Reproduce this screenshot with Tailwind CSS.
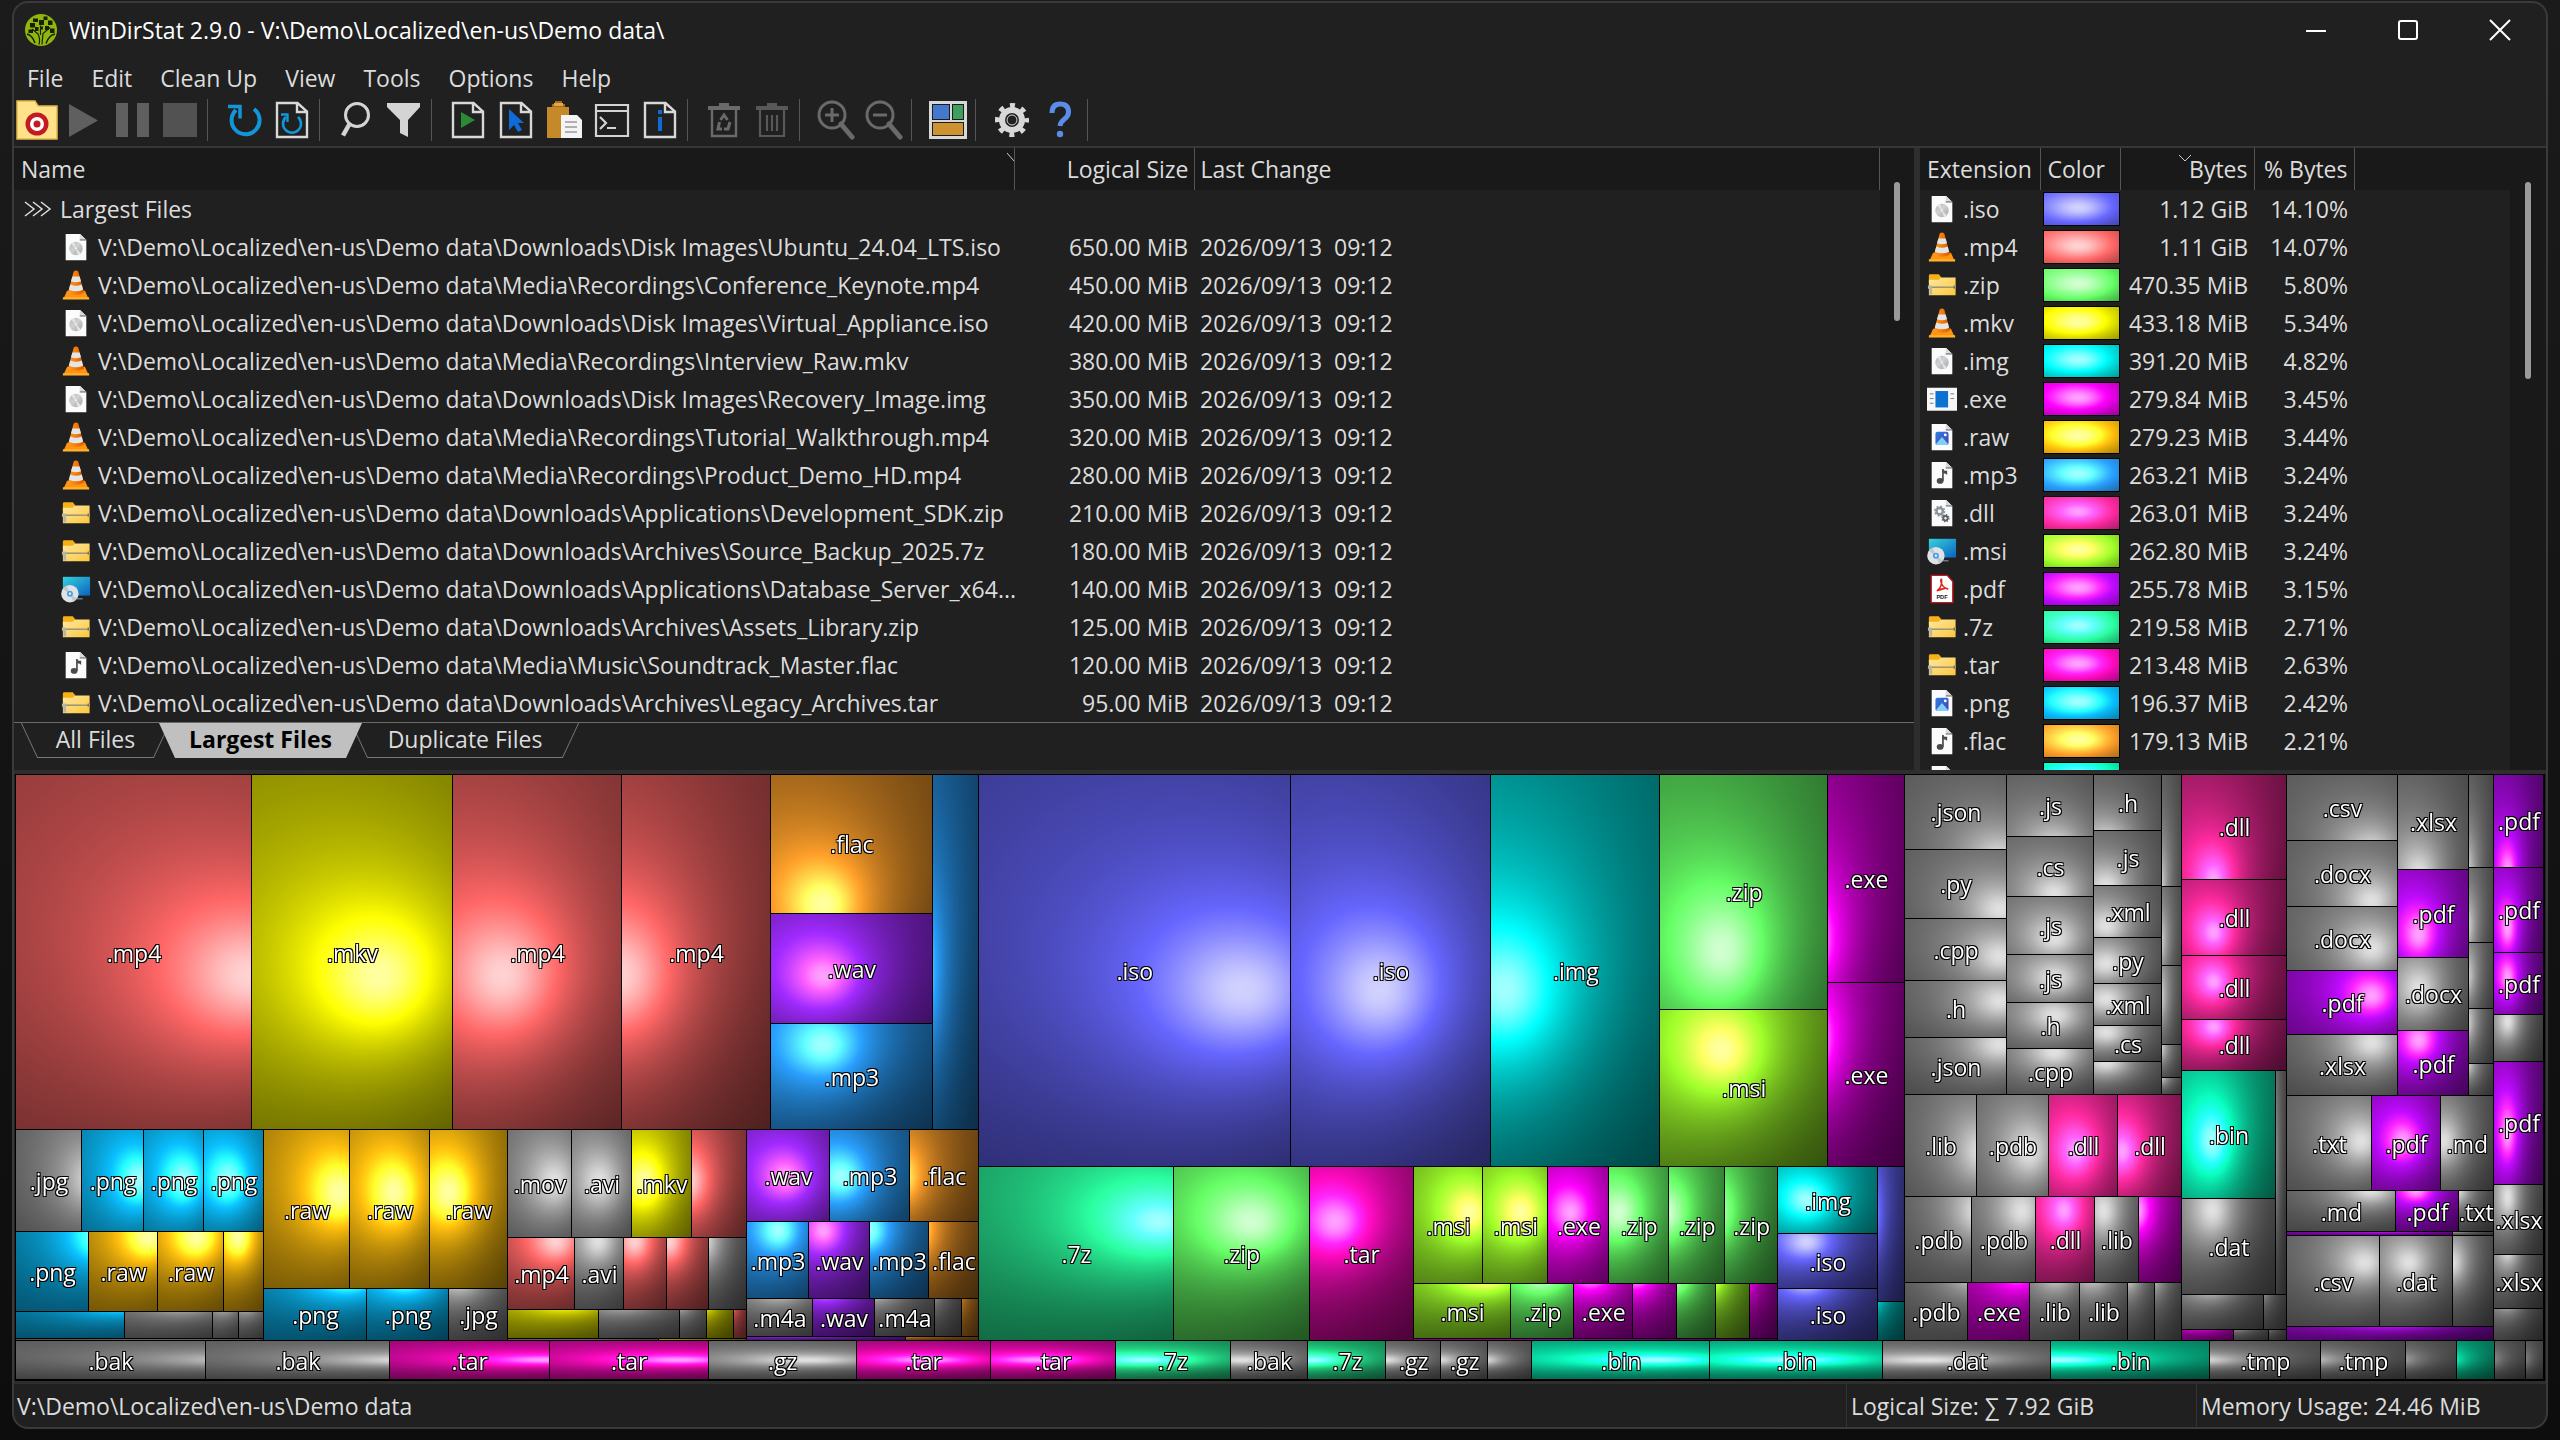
<!DOCTYPE html>
<html lang="en">
  <head>
    <meta charset="UTF-8" />
    <meta name="viewport" content="width=device-width, initial-scale=1.0" />
    <title>WinDirStat 2.9.0 - V:\Demo\Localized\en-us\Demo data\</title>
    <script src="https://cdn.jsdelivr.net/npm/@tailwindcss/browser@4"></script>
  </head>
  <body
    class="h-screen overflow-hidden bg-linear-to-b from-[#1b1b1b] to-[#0d0d0d] pt-px pr-3 pb-[11px] pl-3 font-['Open_Sans',sans-serif] text-[23px] leading-8 text-[#dcdcdc]"
  >
    <!-- Icon sprite -->
    <svg class="absolute size-0" aria-hidden="true">
      <defs>
        <linearGradient id="g-folder" x1="0" y1="0" x2="1" y2="1">
          <stop offset="0" stop-color="#ffe9a2" />
          <stop offset="1" stop-color="#fcc63b" />
        </linearGradient>
        <linearGradient id="g-screen" x1="0" y1="0" x2="1" y2="1">
          <stop offset="0" stop-color="#35d3dc" />
          <stop offset="1" stop-color="#0b62c0" />
        </linearGradient>
        <linearGradient id="g-cone" x1="0" y1="0" x2="1" y2="0">
          <stop offset="0" stop-color="#ff9a2e" />
          <stop offset="0.5" stop-color="#f57a08" />
          <stop offset="1" stop-color="#d95a00" />
        </linearGradient>
        <linearGradient id="g-disc" x1="0" y1="0" x2="1" y2="1">
          <stop offset="0" stop-color="#b4b6b8" />
          <stop offset="0.45" stop-color="#cfd1d2" />
          <stop offset="0.55" stop-color="#c4c6c8" />
          <stop offset="1" stop-color="#a9acae" />
        </linearGradient>
        <linearGradient id="g-image" x1="0" y1="0" x2="1" y2="1">
          <stop offset="0" stop-color="#2b7fe0" />
          <stop offset="1" stop-color="#4a3fb4" />
        </linearGradient>
      </defs>
      <symbol id="i-page" viewBox="0 0 32 32">
        <path d="M5 2h15.500l6.500 6.500V30H5z" fill="#fbfbfb" />
        <path d="M20 2.500v6h7z" fill="#dadada" />
        <path d="M20 8.500h7" stroke="#555" stroke-width="1" />
      </symbol>
      <symbol id="i-disc" viewBox="0 0 32 32">
        <use href="#i-page" />
        <circle cx="16" cy="17.500" r="7.200" fill="url(#g-disc)" />
        <path d="M16 17.500L11 12.300a7.200 7.200 0 0 1 3-1.700zM16 17.500l5 5.200a7.200 7.200 0 0 1-3 1.700z" fill="#e6e7e8" />
        <circle cx="16" cy="17.500" r="1.200" fill="#eee" />
      </symbol>
      <symbol id="i-cone" viewBox="0 0 32 32">
        <path d="M6.500 22h19l4 9h-27z" fill="#ff9410" />
        <path d="M2 29h28v2.500H2z" fill="#ffb02e" />
        <path d="M13.600 1.500Q16 -.5 18.400 1.500L24.500 24q-8.500 5-17 0z" fill="url(#g-cone)" />
        <path d="M12.200 7h7.600l1.600 5q-5.400 2-10.800 0zM9.900 15.500q6.100 2.500 12.200 0l1.500 5.500q-7.600 3.500-15.200 0z" fill="#e3e6e8" />
      </symbol>
      <symbol id="i-zip" viewBox="0 0 32 32">
        <path d="M2 6q0-1.500 1.500-1.500h9L15 7.500V14H2z" fill="#f7b016" />
        <path d="M2 10.500h10.500L15 8h15.500v19H2z" fill="url(#g-folder)" />
        <path d="M2 17h28.500v2.500H2z" fill="#e6d7a2" />
        <path d="M2 18.300h28.500" stroke="#7d6b3a" />
        <path d="M1 16.500h4v3.500H1zM2.500 20h3v6h-3z" fill="#b9b5a6" />
        <path d="M29 16.500v3.500" stroke="#555" />
      </symbol>
      <symbol id="i-msi" viewBox="0 0 32 32">
        <path d="M2 3h29v20H2z" fill="url(#g-screen)" />
        <path d="M17 26h6v1h-6z" fill="#9ab" />
        <circle cx="9.500" cy="21" r="9.300" fill="#dfe3e6" />
        <path d="M9.500 21L2 16a9 9 0 0 1 4-3.500zM9.500 21l7.500 5a9 9 0 0 1-4 3.500z" fill="#c3c8cc" />
        <circle cx="9.500" cy="21" r="3.200" fill="#4ba0e4" />
        <circle cx="9.500" cy="21" r="1.200" fill="#fff" />
      </symbol>
      <symbol id="i-note" viewBox="0 0 32 32">
        <use href="#i-page" />
        <path d="M17 9.500v12.500" stroke="#4a4a4a" stroke-width="1.800" />
        <path d="M16.300 9.500q1 2 5.200 2v4.500q-1-2-4.500-1.800z" fill="#4a4a4a" />
        <ellipse cx="14" cy="22.300" rx="3.600" ry="3" fill="#4a4a4a" />
      </symbol>
      <symbol id="i-exe" viewBox="0 0 32 32">
        <path d="M0 4h32v24.500H0z" fill="#f7f7f7" />
        <path d="M9 7.500h13.500v17.500H9z" fill="#0b72d2" />
        <path d="M3 10.500h4M3 15.500h4M3 20.500h4M25 10.500h4M25 15.500h4" stroke="#777" />
      </symbol>
      <symbol id="i-image" viewBox="0 0 32 32">
        <use href="#i-page" />
        <rect x="9" y="10.500" width="14" height="14" rx="2" fill="url(#g-image)" />
        <path d="M9.500 23.500l6.500-7.500 6.500 7.500q-.5 1-1.500 1h-10q-1 0-1.500-1z" fill="#7fd0f7" />
        <circle cx="19.500" cy="13.800" r="1.500" fill="#fff" />
      </symbol>
      <symbol id="i-gears" viewBox="0 0 32 32">
        <use href="#i-page" />
        <circle cx="13.500" cy="14" r="3.400" fill="none" stroke="#8b9298" stroke-width="2.600" />
        <circle cx="13.500" cy="14" r="5.100" fill="none" stroke="#8b9298" stroke-width="1.800" stroke-dasharray="2 2" />
        <circle cx="19.700" cy="21.500" r="2.300" fill="none" stroke="#5a6167" stroke-width="2" />
        <circle cx="19.700" cy="21.500" r="3.700" fill="none" stroke="#5a6167" stroke-width="1.400" stroke-dasharray="1.450 1.450" />
      </symbol>
      <symbol id="i-pdf" viewBox="0 0 32 32">
        <path d="M4.500 1.500h17l6 6.500v22.500h-23z" fill="#fff" stroke="#c4161c" stroke-width="1.400" />
        <path d="M10.500 18c4-2.500 6-8 5-12.500-2-.5-.5 8.500 6.500 10.500 1.500-1-7-1-11.500 2z" fill="none" stroke="#e2231a" stroke-width="1.600" />
        <text x="16" y="27" text-anchor="middle" font-family="Liberation Sans" font-weight="700" font-size="6" fill="#222">PDF</text>
      </symbol>
      <symbol id="i-doc" viewBox="0 0 36 44">
        <path d="M3 5h20.500L33 13.500V39H3zM23 5v9h10" fill="none" stroke="#d8d8d8" stroke-width="2.400" />
      </symbol>
    </svg>

    <div
      class="flex h-full flex-col overflow-hidden rounded-2xl border-2 border-[#3a3a3a] bg-[#202020]"
    >
      <!-- Title bar -->
      <header class="flex h-[54px] shrink-0 items-center gap-3 pl-[11px] text-white">
        <svg class="size-8" viewBox="0 0 32 32" aria-hidden="true">
          <circle cx="16" cy="16" r="16" fill="#8fb70f" />
          <path d="M14 30.500q1.500-6-1-10.500l-6-5M17 30.500q.5-6 1-11l7-6M15.500 21V11.500" stroke="#1a1f04" stroke-width="1.200" fill="none" />
          <path d="M5 9h5v4.500H5zM8 4.500h5V8H8zM14 6h5v5h-5zM18.500 2.500h4V6h-4zM23 6.500h4.500V11H23zM20 12h4v4h-4zM10 13h3.500v4H10zM3.500 15.500H8V19H3.500zM25 14.500h4.500V19H25zM15 12.500h3v3h-3z" fill="#1a1f04" />
          <path d="M2 20q5 1 8 9M30 20q-6 1-9 9.500" stroke="#1a1f04" stroke-width="1.500" fill="none" />
        </svg>
        <h1 class="flex-1">WinDirStat 2.9.0 - V:\Demo\Localized\en-us\Demo data\</h1>
        <div class="flex">
          <button class="flex h-[54px] w-[92px] items-center justify-center" aria-label="Minimize">
            <svg class="size-6" viewBox="0 0 24 24"><path d="M2 13h20" stroke="#fff" stroke-width="2" /></svg>
          </button>
          <button class="flex h-[54px] w-[92px] items-center justify-center" aria-label="Maximize">
            <svg class="size-6" viewBox="0 0 24 24"><rect x="3" y="3" width="18" height="18" rx="2" fill="none" stroke="#fff" stroke-width="2" /></svg>
          </button>
          <button class="flex h-[54px] w-[92px] items-center justify-center" aria-label="Close">
            <svg class="size-6" viewBox="0 0 24 24"><path d="M2 2l20 20M22 2L2 22" stroke="#fff" stroke-width="2" /></svg>
          </button>
        </div>
      </header>

      <!-- Menu -->
      <nav class="flex h-[41px] shrink-0 items-center gap-7 pl-[13px]">
        <button>File</button>
        <button>Edit</button>
        <button>Clean Up</button>
        <button>View</button>
        <button>Tools</button>
        <button>Options</button>
        <button>Help</button>
      </nav>

      <!-- Toolbar -->
      <div class="flex h-11 shrink-0 items-center" role="toolbar">
        <button class="flex w-[46px] justify-center" aria-label="Open">
          <svg class="h-[44px] w-[42px]" viewBox="0 0 42 44">
            <path d="M1 3h18l3 5h19v33H1z" fill="#ffe28a" stroke="#e2b84c" stroke-width="1.500" />
            <circle cx="21" cy="26" r="11.500" fill="#c41a22" />
            <circle cx="21" cy="26" r="7" fill="#fff" />
            <circle cx="21" cy="26" r="3.500" fill="#c41a22" />
          </svg>
        </button>
        <button class="flex w-12 justify-center" aria-label="Resume">
          <svg class="h-[44px] w-9" viewBox="0 0 36 44"><path d="M3 6l29 16.500L3 39z" fill="#5f5f5f" /></svg>
        </button>
        <button class="flex w-12 justify-center" aria-label="Pause">
          <svg class="h-[44px] w-9" viewBox="0 0 36 44"><path d="M2 5h12v34H2zM23 5h12v34H23z" fill="#5f5f5f" /></svg>
        </button>
        <button class="flex w-12 justify-center" aria-label="Stop">
          <svg class="h-[44px] w-9" viewBox="0 0 36 44"><path d="M1 5h34v34H1z" fill="#525252" /></svg>
        </button>
        <span class="mr-3 ml-[3px] h-[42px] w-px bg-[#555]"></span>
        <button class="flex w-12 justify-center" aria-label="Refresh all">
          <svg class="h-[44px] w-9" viewBox="0 0 36 44"><path d="M28 11a14 14 0 1 1-18 1" fill="none" stroke="#1296d8" stroke-width="4" /><path d="M2 8.500h12v12" fill="none" stroke="#1296d8" stroke-width="3.500" /></svg>
        </button>
        <button class="flex w-12 justify-center" aria-label="Refresh selected">
          <svg class="h-[44px] w-9" viewBox="0 0 36 44"><use href="#i-doc" /><path d="M24 19a9 9 0 1 1-12 0" fill="none" stroke="#1296d8" stroke-width="2.600" /><path d="M7 16.500h6.500v7.500" fill="none" stroke="#1296d8" stroke-width="2.400" /></svg>
        </button>
        <span class="mr-3 ml-[3px] h-[42px] w-px bg-[#555]"></span>
        <button class="flex w-12 justify-center" aria-label="Search">
          <svg class="h-[44px] w-9" viewBox="0 0 36 44"><circle cx="19" cy="17" r="11.500" fill="none" stroke="#d4d4d4" stroke-width="3" /><path d="M11.500 26L5 37.500" stroke="#d4d4d4" stroke-width="4.500" /></svg>
        </button>
        <button class="flex w-12 justify-center" aria-label="Filter">
          <svg class="h-[44px] w-9" viewBox="0 0 36 44"><path d="M1 5h33v4L22 22v17l-8-4V22L1 9z" fill="#d4d4d4" /></svg>
        </button>
        <span class="mr-3 ml-[3px] h-[42px] w-px bg-[#555]"></span>
        <button class="flex w-12 justify-center" aria-label="Open item">
          <svg class="h-[44px] w-9" viewBox="0 0 36 44"><use href="#i-doc" /><path d="M11 14l14 8-14 8z" fill="#2b8a33" /></svg>
        </button>
        <button class="flex w-12 justify-center" aria-label="Select in Explorer">
          <svg class="h-[44px] w-9" viewBox="0 0 36 44"><use href="#i-doc" /><path d="M11 11l15 14h-6l4 7-4 2-4-7-5 5z" fill="#0f6bd7" /></svg>
        </button>
        <button class="flex w-12 justify-center" aria-label="Copy path">
          <svg class="h-[44px] w-9" viewBox="0 0 36 44"><path d="M1 9h22v31H1z" fill="#c5892a" /><path d="M6 9V6h3V3h7v3h3v3z" fill="#a86c12" /><path d="M8 5h9v3H8z" fill="#e0a94b" /><path d="M15 17h16l5 5v18H15z" fill="#f4f4f4" /><path d="M19 24h12M19 29h12M19 34h12" stroke="#999" stroke-width="1.500" /></svg>
        </button>
        <button class="flex w-12 justify-center" aria-label="Command prompt">
          <svg class="h-[44px] w-9" viewBox="0 0 36 44"><path d="M2 7h32v31H2zM2 13h32" fill="none" stroke="#d4d4d4" stroke-width="2.200" /><path d="M6 19l6 6-6 6M13 30h9" fill="none" stroke="#d4d4d4" stroke-width="2.200" /></svg>
        </button>
        <button class="flex w-12 justify-center" aria-label="Properties">
          <svg class="h-[44px] w-9" viewBox="0 0 36 44"><use href="#i-doc" /><path d="M16 12h4v4h-4zM16 19h4v14h-4z" fill="#0f6bd7" /></svg>
        </button>
        <span class="mr-3 ml-[3px] h-[42px] w-px bg-[#555]"></span>
        <button class="flex w-12 justify-center" aria-label="Recycle">
          <svg class="h-[44px] w-9" viewBox="0 0 36 44"><path d="M2 8h32v4H2zM13 5h10v4H13z" fill="#6a6a6a" /><path d="M6 12v26h24V12" fill="none" stroke="#6a6a6a" stroke-width="2.400" /><path d="M14.500 22l3.500-5 3.500 5M24 24l-2 7h-4M16 31h-4l1.500-7" fill="none" stroke="#6a6a6a" stroke-width="3" /></svg>
        </button>
        <button class="flex w-12 justify-center" aria-label="Delete">
          <svg class="h-[44px] w-9" viewBox="0 0 36 44"><path d="M2 8h32v4H2zM13 5h10v4H13z" fill="#585858" /><path d="M6 12v26h24V12M13 17v16M18 17v16M23 17v16" fill="none" stroke="#585858" stroke-width="2.200" /></svg>
        </button>
        <span class="mr-3 ml-[3px] h-[42px] w-px bg-[#555]"></span>
        <button class="flex w-12 justify-center" aria-label="Zoom in">
          <svg class="h-[44px] w-[38px]" viewBox="0 0 38 44"><circle cx="15" cy="17" r="13" fill="none" stroke="#6a6a6a" stroke-width="3" /><path d="M24 26l11 13" stroke="#6a6a6a" stroke-width="5" stroke-linecap="round" /><path d="M15 10v14M8 17h14" stroke="#6a6a6a" stroke-width="3" /></svg>
        </button>
        <button class="flex w-12 justify-center" aria-label="Zoom out">
          <svg class="h-[44px] w-[38px]" viewBox="0 0 38 44"><circle cx="15" cy="17" r="13" fill="none" stroke="#6a6a6a" stroke-width="3" /><path d="M24 26l11 13" stroke="#6a6a6a" stroke-width="5" stroke-linecap="round" /><path d="M8 17h14" stroke="#6a6a6a" stroke-width="3" /></svg>
        </button>
        <span class="mr-3 ml-[3px] h-[42px] w-px bg-[#555]"></span>
        <button class="flex w-12 justify-center" aria-label="Show treemap">
          <svg class="h-[44px] w-[38px]" viewBox="0 0 38 44"><path d="M0 3h38v38H0z" fill="#d8d8d8" /><path d="M3 6h18v16H3zM23 6h12v16H23zM3 24h32v14H3z" fill="#1b1b1b" /><path d="M4 7h16v14H4z" fill="#4478cc" /><path d="M24 7h10v14H24z" fill="#3f9f5c" /><path d="M4 25h30v12H4z" fill="#cf9230" /></svg>
        </button>
        <span class="mr-3 ml-[3px] h-[42px] w-px bg-[#555]"></span>
        <button class="flex w-12 justify-center" aria-label="Settings">
          <svg class="h-[44px] w-9" viewBox="0 0 36 44"><circle cx="18" cy="22" r="14.500" fill="none" stroke="#d8d8d8" stroke-width="5" stroke-dasharray="5 6.390" stroke-dashoffset="2.500" /><circle cx="18" cy="22" r="10" fill="none" stroke="#d8d8d8" stroke-width="6" /><circle cx="18" cy="22" r="5" fill="none" stroke="#d8d8d8" stroke-width="1" /></svg>
        </button>
        <button class="flex w-12 justify-center" aria-label="Help">
          <svg class="h-[44px] w-9" viewBox="0 0 36 44"><path d="M10 15q0-9 8-9 8.500 0 8.500 8 0 4-4 7t-4.500 7" fill="none" stroke="#5b8de8" stroke-width="5" /><circle cx="18" cy="36" r="3.200" fill="#5b8de8" /></svg>
        </button>
        <span class="ml-[3px] h-[42px] w-px bg-[#555]"></span>
      </div>

      <!-- Lists -->
      <section class="mt-1 flex h-[624px] shrink-0 border-t-2 border-[#363636]">
        <div class="flex min-w-0 flex-1 flex-col">
          <div class="flex border-b border-[#6a6a6a]">
            <table class="w-full flex-1 table-fixed border-collapse">
              <thead>
                <tr class="h-[42px] bg-[#191919] text-left">
                  <th class="w-[1000px] border-r border-[#555] pl-[7px] font-normal">
                    <span class="flex justify-between">Name
                      <svg class="h-3 w-2" viewBox="0 0 8 12"><path d="M1 0l7 8" stroke="#ccc" /></svg>
                    </span>
                  </th>
                  <th class="w-[180px] border-r border-[#555] pr-[5px] text-right font-normal">Logical Size</th>
                  <th class="border-r border-[#555] pl-[6px] font-normal">Last Change</th>
                </tr>
              </thead>
              <tbody id="files">
                <tr class="h-[38px]">
                  <td colspan="3" class="pl-[10px]">
                    <span class="flex items-center gap-2">
                      <svg class="h-4 w-7" viewBox="0 0 28 16"><path d="M1 1l9 7-9 7M9 1l9 7-9 7M17 1l9 7-9 7" fill="none" stroke="#ddd" stroke-width="1.500" /></svg>
                      Largest Files
                    </span>
                  </td>
                </tr>
              </tbody>
            </table>
            <div class="w-[34px] bg-[#191919] pt-[34px]">
              <div class="ml-[14px] h-[139px] w-[6px] rounded-full bg-[#9a9a9a]"></div>
            </div>
          </div>
          <div class="flex h-[35px] pl-[7px]" role="tablist">
            <button role="tab" class="relative w-[149px] before:absolute before:top-0 before:left-2 before:h-full before:w-px before:skew-x-[25deg] before:bg-[#777] after:absolute after:top-0 after:right-2 after:h-full after:w-px after:-skew-x-[25deg] after:bg-[#777]">
              <span class="mx-4 block h-[35px] border-b border-[#777]">All Files</span>
            </button>
            <button role="tab" aria-selected="true" class="z-10 -ml-[11px] w-[203px] bg-[#c0c0c0] pb-[3px] font-bold text-black [clip-path:polygon(0_0,100%_0,calc(100%-16px)_100%,16px_100%)]">Largest Files</button>
            <button role="tab" class="relative -ml-[11px] w-[228px] before:absolute before:top-0 before:left-2 before:h-full before:w-px before:skew-x-[25deg] before:bg-[#777] after:absolute after:top-0 after:right-2 after:h-full after:w-px after:-skew-x-[25deg] after:bg-[#777]">
              <span class="mx-4 block h-[35px] border-b border-[#777]">Duplicate Files</span>
            </button>
          </div>
        </div>
        <div class="flex w-[632px] overflow-hidden border-l-6 border-[#2e2e2e]">
          <div class="flex-1">
            <table class="w-full table-fixed border-collapse">
              <thead>
                <tr class="h-[42px] bg-[#191919] text-left">
                  <th class="w-[120px] border-r border-[#555] pl-[7px] font-normal">Extension</th>
                  <th class="w-[80px] border-r border-[#555] pl-[7px] font-normal">Color</th>
                  <th class="relative w-[134px] border-r border-[#555] pr-[6px] text-right font-normal">
                    <svg class="absolute top-1 left-14 h-3 w-4" viewBox="0 0 16 12"><path d="M2 3l6 6 6-6" fill="none" stroke="#ccc" /></svg>Bytes
                  </th>
                  <th class="w-[100px] border-r border-[#555] pr-[6px] text-right font-normal">% Bytes</th>
                  <th><span class="sr-only">More</span></th>
                </tr>
              </thead>
              <tbody id="extensions"></tbody>
            </table>
          </div>
          <div class="w-[36px] bg-[#191919] pt-[34px]">
            <div class="ml-[15px] h-[197px] w-[6px] rounded-full bg-[#9a9a9a]"></div>
          </div>
        </div>
      </section>

      <!-- Treemap -->
      <main class="flex min-h-0 flex-1 border-t-4 border-b-3 border-[#2e2e2e] px-px">
        <div id="treemap" class="relative flex min-w-0 flex-1 border border-black bg-black">
          <canvas id="cushions" class="absolute inset-0"></canvas>
        </div>
      </main>

      <!-- Status bar -->
      <footer class="flex h-[43px] shrink-0 items-center">
        <div class="flex-1 pl-[3px]">V:\Demo\Localized\en-us\Demo data</div>
        <div class="flex h-full w-[350px] items-center border-l border-[#333] pl-1">Logical Size: ∑ 7.92 GiB</div>
        <div class="flex h-full w-[350px] items-center border-l border-[#333] pl-1">Memory Usage: 24.46 MiB</div>
      </footer>
    </div>

    <script>
      const COLORS = {
        iso: [102, 102, 255],
        mp4: [255, 102, 102],
        zip: [102, 255, 102],
        mkv: [229, 229, 0],
        img: [0, 229, 229],
        exe: [229, 0, 229],
        raw: [255, 191, 13],
        mp3: [42, 160, 255],
        dll: [255, 42, 160],
        msi: [160, 255, 42],
        pdf: [192, 10, 255],
        "7z": [42, 255, 160],
        tar: [255, 10, 192],
        png: [10, 192, 255],
        flac: [255, 160, 42],
        bin: [10, 255, 192],
        wav: [160, 42, 255],
      };
      const GRAY = [153, 153, 153];

      const ROOT = "V:\\Demo\\Localized\\en-us\\Demo data\\";
      const FILES = [
        ["disc", "Downloads\\Disk Images\\Ubuntu_24.04_LTS.iso", "650.00"],
        ["cone", "Media\\Recordings\\Conference_Keynote.mp4", "450.00"],
        ["disc", "Downloads\\Disk Images\\Virtual_Appliance.iso", "420.00"],
        ["cone", "Media\\Recordings\\Interview_Raw.mkv", "380.00"],
        ["disc", "Downloads\\Disk Images\\Recovery_Image.img", "350.00"],
        ["cone", "Media\\Recordings\\Tutorial_Walkthrough.mp4", "320.00"],
        ["cone", "Media\\Recordings\\Product_Demo_HD.mp4", "280.00"],
        ["zip", "Downloads\\Applications\\Development_SDK.zip", "210.00"],
        ["zip", "Downloads\\Archives\\Source_Backup_2025.7z", "180.00"],
        ["msi", "Downloads\\Applications\\Database_Server_x64...", "140.00"],
        ["zip", "Downloads\\Archives\\Assets_Library.zip", "125.00"],
        ["note", "Media\\Music\\Soundtrack_Master.flac", "120.00"],
        ["zip", "Downloads\\Archives\\Legacy_Archives.tar", "95.00"],
      ];
      const EXTENSIONS = [
        ["disc", "iso", "1.12 GiB", "14.10%"],
        ["cone", "mp4", "1.11 GiB", "14.07%"],
        ["zip", "zip", "470.35 MiB", "5.80%"],
        ["cone", "mkv", "433.18 MiB", "5.34%"],
        ["disc", "img", "391.20 MiB", "4.82%"],
        ["exe", "exe", "279.84 MiB", "3.45%"],
        ["image", "raw", "279.23 MiB", "3.44%"],
        ["note", "mp3", "263.21 MiB", "3.24%"],
        ["gears", "dll", "263.01 MiB", "3.24%"],
        ["msi", "msi", "262.80 MiB", "3.24%"],
        ["pdf", "pdf", "255.78 MiB", "3.15%"],
        ["zip", "7z", "219.58 MiB", "2.71%"],
        ["zip", "tar", "213.48 MiB", "2.63%"],
        ["image", "png", "196.37 MiB", "2.42%"],
        ["note", "flac", "179.13 MiB", "2.21%"],
        ["page", "bin", "", ""],
      ];

      document.getElementById("files").insertAdjacentHTML(
        "beforeend",
        FILES.map(
          ([icon, path, size]) => `
          <tr class="h-[38px]">
            <td class="pl-[47px]">
              <span class="flex items-center gap-[7px] whitespace-nowrap">
                <svg class="size-[30px] shrink-0"><use href="#i-${icon}" /></svg>${ROOT + path}
              </span>
            </td>
            <td class="pr-[6px] text-right">${size} MiB</td>
            <td class="pl-[6px] whitespace-pre">2026/09/13  09:12</td>
          </tr>`,
        ).join(""),
      );

      document.getElementById("extensions").innerHTML = EXTENSIONS.map(
        ([icon, ext, bytes, pct]) => `
        <tr class="h-[38px]">
          <td class="pl-[7px]">
            <span class="flex items-center gap-[6px]">
              <svg class="size-[30px] shrink-0"><use href="#i-${icon}" /></svg>.${ext}
            </span>
          </td>
          <td class="pl-[3px]"><canvas width="75" height="32" data-ext="${ext}" class="block border border-black"></canvas></td>
          <td class="pr-[6px] text-right">${bytes}</td>
          <td class="pr-[6px] text-right">${pct}</td>
          <td></td>
        </tr>`,
      ).join("");

      // Treemap data: "ext size" is a file, a leading "-" hides its label
      const row = (size, ...kids) => ({ dir: "row", size, kids });
      const col = (size, ...kids) => ({ dir: "col", size, kids });
      const folder = (node) => ({ ...node, folder: true });

      const media = folder(
        col(963,
          row(356,
            folder(row(755, "mp4 236", "mkv 201", "mp4 169", "mp4 149")),
            folder(row(208, col(161, "flac 139", "wav 110", "mp3 107"), "-mp3 46")),
          ),
          row(211,
            folder(col(248,
              row(102, "jpg 66", "png 62", "png 60", "png 60"),
              row(80, "png 73", "raw 69", "raw 66", "-raw 40"),
              row(27, "-png 109", "-other 88", "-other 26", "-other 25"),
              "-other 2",
            )),
            folder(col(244,
              row(159, "raw 86", "raw 80", "raw 78"),
              row(52, "png 103", "png 82", "jpg 59"),
            )),
            folder(col(239,
              row(108, "mov 64", "avi 60", "mkv 60", "-mp4 55"),
              row(72, "mp4 67", "avi 49", "-mp4 43", "-mp4 42", "-other 38"),
              row(29, "-mkv 91", "-other 81", "-other 27", "-mkv 27", "-mp4 13"),
              row(2, "-other 151", "-mkv 88"),
            )),
            folder(col(232,
              row(92, "wav 83", "mp3 80", "flac 69"),
              row(77, "mp3 62", "wav 61", "mp3 59", "flac 50"),
              row(38, "m4a 66", "wav 62", "m4a 60", "-other 27", "-flac 17"),
              row(4, "-wav 159", "-flac 73"),
            )),
          ),
        ),
      );

      const downloads = folder(
        col(926,
          row(393,
            folder(row(682, "iso 312", "iso 201", "img 169")),
            folder(row(245, col(168, "zip 235", "msi 158"), col(77, "exe 208", "exe 185"))),
          ),
          row(174,
            folder(row(435, "7z 195", "zip 136", "tar 104")),
            folder(col(365,
              row(117, "msi 70", "msi 65", "exe 61", "zip 60", "zip 56", "zip 53"),
              row(55, "msi 98", "zip 63", "exe 59", "-exe 44", "-zip 39", "-msi 34", "-exe 28"),
              "-exe 2",
            )),
            folder(row(127, col(100, "img 67", "iso 55", "iso 52"), col(27, "-iso 135", "-img 39"))),
          ),
        ),
      );

      const development = folder(
        row(382,
          col(277,
            folder(row(321,
              col(102, "json 75", "py 69", "cpp 62", "h 57", "json 58"),
              col(87, "js 62", "cs 60", "js 58", "js 48", "h 46", "cpp 47"),
              col(68, "h 56", "js 55", "xml 52", "py 46", "xml 42", "cs 36", "-other 34"),
              col(20, "-other 112", "-other 79", "-other 79", "-other 33", "-other 18"),
            )),
            folder(col(246,
              row(102, "lib 72", "pdb 72", "dll 69", "dll 64"),
              row(86, "pdb 67", "pdb 64", "dll 59", "lib 44", "-exe 43"),
              row(58, "pdb 63", "exe 62", "lib 50", "lib 48", "-other 27", "-other 27"),
            )),
          ),
          col(105,
            folder(col(296, "dll 105", "dll 76", "dll 64", "dll 51")),
            folder(col(271,
              row(225, col(94, "bin 129", "dat 96"), "-other 11"),
              row(35, "-other 82", "-other 23"),
              row(11, "-exe 52", "-other 35", "-other 18"),
            )),
          ),
        ),
      );

      const documents = folder(
        row(257,
          col(207,
            folder(row(322,
              col(111, "csv 66", "docx 66", "docx 64", "pdf 64", "xlsx 62"),
              col(71, "xlsx 95", "pdf 88", "docx 73", "pdf 66"),
              col(25, "-other 93", "-other 75", "-other 66", "-other 55", "-other 33"),
            )),
            folder(col(140,
              row(95, "txt 85", "pdf 69", "md 53"),
              row(41, "md 109", "pdf 63", "txt 35"),
              row(4, "-pdf 166", "-other 41"),
            )),
            folder(col(105, row(91, "csv 93", "dat 73", "-other 41"), "-pdf 14")),
          ),
          col(50,
            folder(col(287, "pdf 93", "pdf 85", "pdf 62", "-other 47")),
            folder(col(280, "pdf 124", "xlsx 70", "xlsx 54", "-other 32")),
          ),
        ),
      );

      const backups = folder(
        row(39,
          folder(row(1517,
            "bak 190", "bak 184", "tar 160", "tar 159", "gz 148", "tar 134", "tar 125", "7z 115",
            "bak 78", "7z 78", "gz 55", "gz 47", "-other 44",
          )),
          folder(row(1012,
            "bin 178", "bin 173", "dat 168", "bin 159", "tmp 111", "tmp 85", "-other 51", "-bin 38",
            "-other 31", "-other 18",
          )),
        ),
      );

      const tree = col(1, row(567, media, downloads, development, documents), backups);

      function build(node, parent) {
        const el = document.createElement("div");
        parent.appendChild(el);
        if (typeof node === "string") {
          const [name, size] = node.split(" ");
          el.className =
            "relative flex min-h-0 min-w-0 basis-0 items-center justify-center overflow-hidden text-white [text-shadow:1px_1px_0_#000,-1px_1px_0_#000,1px_-1px_0_#000,-1px_-1px_0_#000]";
          el.style.flexGrow = size;
          if (name[0] !== "-") el.textContent = "." + name;
          return { el, ext: name.replace("-", ""), leaf: true };
        }
        el.className =
          node.dir === "row"
            ? "flex min-h-0 min-w-0 basis-0 flex-row"
            : "flex min-h-0 min-w-0 basis-0 flex-col";
        el.style.flexGrow = node.size;
        return { el, folder: node.folder, kids: node.kids.map((k) => build(k, el)) };
      }

      // Cushion shading
      const HEIGHT = 0.38;
      const SCALE = 0.91;
      const AMBIENT = 0.13;
      const BRIGHTNESS = 0.88 / 0.6;
      const LIGHT = [-1, -1, 10].map((v) => v / Math.sqrt(102));

      function addRidge(s, r, h) {
        const wf = (4 * h) / (r.x2 - r.x1);
        const hf = (4 * h) / (r.y2 - r.y1);
        return [s[0] - wf, s[1] - hf, s[2] + wf * (r.x1 + r.x2), s[3] + hf * (r.y1 + r.y2)];
      }

      function normalize(c) {
        for (let i = 0; i < 3; i++) {
          if (c[i] <= 255) continue;
          const j = (i + 1) % 3;
          const k = (i + 2) % 3;
          const half = (c[i] - 255) / 2;
          c[i] = 255;
          c[j] += half;
          c[k] += half;
          if (c[j] > 255) {
            c[k] += c[j] - 255;
            c[j] = 255;
          }
          if (c[k] > 255) {
            c[j] = Math.min(255, c[j] + c[k] - 255);
            c[k] = 255;
          }
        }
        return c;
      }

      function drawCushion(ctx, r, s, color) {
        const w = r.x2 - r.x1 - r.gap;
        const h = r.y2 - r.y1 - r.gap;
        if (w < 1 || h < 1) return;
        const img = ctx.createImageData(w, h);
        let p = 0;
        for (let y = 0; y < h; y++) {
          for (let x = 0; x < w; x++) {
            const nx = -(2 * s[0] * (r.x1 + x + 0.5) + s[2]);
            const ny = -(2 * s[1] * (r.y1 + y + 0.5) + s[3]);
            const cosa = Math.max(0, (nx * LIGHT[0] + ny * LIGHT[1] + LIGHT[2]) / Math.sqrt(nx * nx + ny * ny + 1));
            const f = (AMBIENT + (1 - AMBIENT) * cosa) * BRIGHTNESS;
            const c = normalize(color.map((v) => v * f));
            img.data[p++] = c[0];
            img.data[p++] = c[1];
            img.data[p++] = c[2];
            img.data[p++] = 255;
          }
        }
        ctx.putImageData(img, r.x1, r.y1);
      }

      const map = document.getElementById("treemap");
      const canvas = document.getElementById("cushions");
      const root = build(tree, map);

      function draw() {
        const origin = canvas.getBoundingClientRect();
        canvas.width = map.clientWidth;
        canvas.height = map.clientHeight;
        const ctx = canvas.getContext("2d");
        (function walk(node, s, h) {
          const b = node.el.getBoundingClientRect();
          const r = {
            x1: Math.round(b.left - origin.left),
            y1: Math.round(b.top - origin.top),
            x2: Math.round(b.right - origin.left),
            y2: Math.round(b.bottom - origin.top),
            gap: 1,
          };
          if (node.folder || node.leaf) {
            s = addRidge(s, r, h);
            h *= SCALE;
          }
          if (node.leaf) drawCushion(ctx, r, s, COLORS[node.ext] || GRAY);
          else node.kids.forEach((k) => walk(k, s, h));
        })(root, [0, 0, 0, 0], HEIGHT * SCALE);
      }

      document.querySelectorAll("canvas[data-ext]").forEach((c) => {
        const r = { x1: 0, y1: 0, x2: c.width, y2: c.height, gap: 0 };
        drawCushion(c.getContext("2d"), r, addRidge([0, 0, 0, 0], r, 0.3), COLORS[c.dataset.ext] || GRAY);
      });

      draw();
      window.addEventListener("load", draw);
      window.addEventListener("resize", draw);
    </script>
  </body>
</html>
